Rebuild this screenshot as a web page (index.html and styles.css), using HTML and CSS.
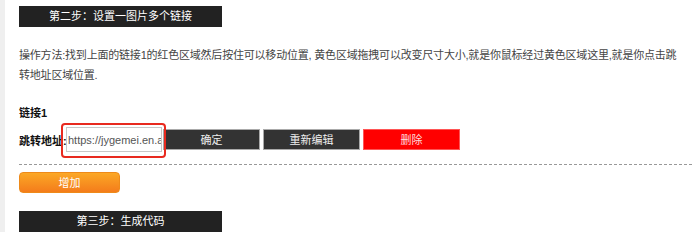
FILE: index.html
```html
<!DOCTYPE html>
<html lang="zh-CN">
<head>
<meta charset="utf-8">
<title>设置一图片多个链接</title>
<link rel="stylesheet" href="styles.css">
</head>
<body>
<div class="page">
  <div class="strip"></div>
  <div class="main">
    <div class="step-title">第二步：设置一图片多个链接</div>
    <p class="desc">操作方法:找到上面的链接1的红色区域然后按住可以移动位置, 黄色区域拖拽可以改变尺寸大小,就是你鼠标经过黄色区域这里,就是你点击跳转地址区域位置.</p>
    <div class="link-name">链接1</div>
    <div class="link-row">
      <span class="label">跳转地址:</span>
      <span class="input-wrap"><input class="url" type="text" value="https://jygemei.en.alibaba.com/"></span>
      <button class="btn btn-dark">确定</button>
      <button class="btn btn-dark">重新编辑</button>
      <button class="btn btn-red">删除</button>
    </div>
    <div class="divider"></div>
    <button class="btn-add">增加</button>
    <div class="step-title step-three">第三步：生成代码</div>
  </div>
</div>
</body>
</html>
```

FILE: styles.css
```css
html, body {
  margin: 0;
  padding: 0;
  background: #fff;
}
body {
  font-family: "Liberation Sans", "Noto Sans CJK SC", sans-serif;
  font-size: 11px;
  color: #333;
  overflow: hidden;
}
.page {
  display: flex;
  min-height: 225px;
}
.strip {
  width: 5px;
  background: #efefef;
  flex: none;
}
.main {
  flex: 1;
  padding-left: 14px;
}
.step-title {
  width: 203px;
  height: 21px;
  line-height: 21px;
  margin-top: 6px;
  background: #222;
  color: #fff;
  text-align: center;
  font-size: 11px;
}
.desc {
  margin: 18px 0 0;
  padding-right: 12px;
  line-height: 20px;
  color: #444;
  letter-spacing: -0.2px;
}
.link-name {
  margin-top: 18px;
  line-height: 20px;
  font-weight: bold;
  color: #111;
}
.link-row {
  display: flex;
  align-items: center;
  margin-top: 4px;
  height: 25px;
}
.label {
  width: 47px;
  font-weight: bold;
  color: #111;
  white-space: nowrap;
}
.input-wrap {
  position: relative;
  display: block;
}
.input-wrap::after {
  content: "";
  position: absolute;
  left: -5px;
  right: -4px;
  top: -4px;
  bottom: -6px;
  border: 2px solid #e82a1f;
  border-radius: 4px;
  pointer-events: none;
}
.url {
  display: block;
  box-sizing: border-box;
  width: 96px;
  height: 25px;
  margin: 0;
  padding: 0 0 0 1px;
  border: 1px solid #c8c8c8;
  font-family: "Liberation Sans", sans-serif;
  font-size: 11px;
  color: #555;
  background: #fff;
  outline: none;
}
.btn {
  box-sizing: border-box;
  width: 97px;
  height: 21px;
  margin: 0 0 0 3px;
  padding: 0;
  font-family: "Noto Sans CJK SC", sans-serif;
  font-size: 11px;
  line-height: 19px;
  cursor: pointer;
}
.link-row .input-wrap + .btn {
  margin-left: 1px;
}
.btn-dark {
  background: #333;
  border: 1px solid #aaa;
  color: #eee;
}
.btn-red {
  background: #ff0000;
  border: 1px solid #f55;
  color: #fdd;
}
.divider {
  margin-top: 12px;
  border-top: 1px dashed #999;
}
.btn-add {
  display: block;
  box-sizing: border-box;
  width: 101px;
  height: 21px;
  margin-top: 7px;
  padding: 0;
  border: 1px solid #ee8a1a;
  border-radius: 4px;
  background: linear-gradient(#fba826, #f47c1b);
  color: #fff;
  font-family: "Noto Sans CJK SC", sans-serif;
  font-size: 11px;
  line-height: 19px;
}
.step-three {
  margin-top: 18px;
}
```
